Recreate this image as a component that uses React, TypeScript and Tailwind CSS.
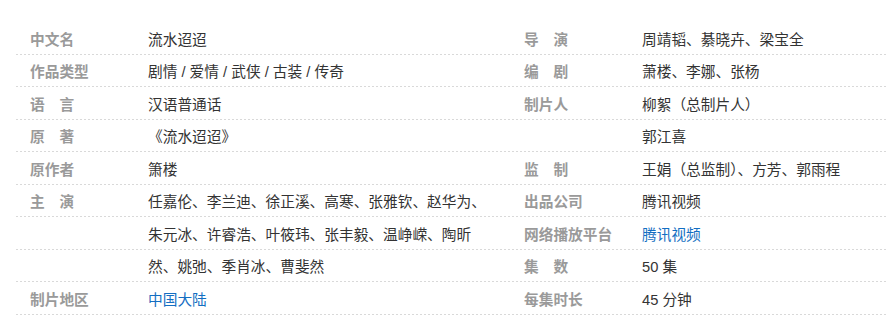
type Item = { label: string; value: string; link?: boolean };

const left: Item[] = [
  { label: "中文名", value: "流水迢迢" },
  { label: "作品类型", value: "剧情 / 爱情 / 武侠 / 古装 / 传奇" },
  { label: "语\u3000言", value: "汉语普通话" },
  { label: "原\u3000著", value: "《流水迢迢》" },
  { label: "原作者", value: "箫楼" },
  { label: "主\u3000演", value: "任嘉伦、李兰迪、徐正溪、高寒、张雅钦、赵华为、" },
  { label: "", value: "朱元冰、许睿浩、叶筱玮、张丰毅、温峥嵘、陶昕" },
  { label: "", value: "然、姚弛、季肖冰、曹斐然" },
  { label: "制片地区", value: "中国大陆", link: true },
];

const right: Item[] = [
  { label: "导\u3000演", value: "周靖韬、綦晓卉、梁宝全" },
  { label: "编\u3000剧", value: "萧楼、李娜、张杨" },
  { label: "制片人", value: "柳絮（总制片人）" },
  { label: "", value: "郭江喜" },
  { label: "监\u3000制", value: "王娟（总监制）、方芳、郭雨程" },
  { label: "出品公司", value: "腾讯视频" },
  { label: "网络播放平台", value: "腾讯视频", link: true },
  { label: "集\u3000数", value: "50 集" },
  { label: "每集时长", value: "45 分钟" },
];

function Column({ items }: { items: Item[] }) {
  return (
    <dl>
      {items.map((it, i) => (
        <div
          key={i}
          className="flex h-[32.5px] items-center bg-[linear-gradient(to_right,#d9d9d9_50%,transparent_50%)] bg-[length:4px_1px] bg-bottom bg-repeat-x pl-[15px] pt-[4px]"
        >
          <dt className="w-[118px] shrink-0 whitespace-nowrap font-bold text-[#9a9a9a]">{it.label}</dt>
          <dd className={it.link ? "whitespace-nowrap text-[#136ec2]" : "whitespace-nowrap text-[#333]"}>
            {it.value}
          </dd>
        </div>
      ))}
    </dl>
  );
}

export default function App() {
  return (
    <div className="h-[330px] w-[887px] overflow-hidden bg-white pl-[15px] pt-[22px] font-['Liberation_Sans','Microsoft_YaHei','Noto_Sans_CJK_SC',sans-serif] text-[14.7px] leading-none">
      <div className="grid grid-cols-[494px_1fr]">
        <Column items={left} />
        <Column items={right} />
      </div>
    </div>
  );
}
